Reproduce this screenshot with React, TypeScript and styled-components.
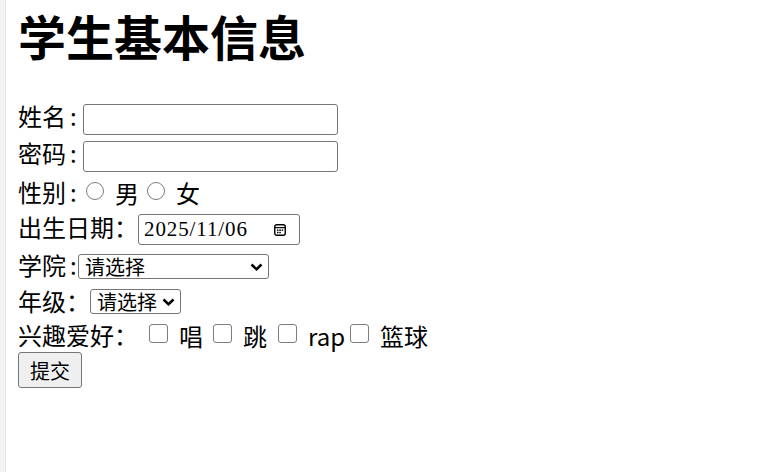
import * as React from 'react'
import styled, { createGlobalStyle } from 'styled-components'

const GlobalStyle = createGlobalStyle`
	html, body {
		margin: 0;
		padding: 0;
		background: #fff;
	}
	body {
		font-family: "Noto Sans CJK SC", "Microsoft YaHei", sans-serif;
		color: #000;
	}
`

const Page = styled.div`
	display: flex;
	min-height: 472px;
	border-left: 5px solid #f3f3f3;
`

const Form = styled.form`
	flex: 1;
	display: flex;
	flex-direction: column;
	border-left: 1px solid #e6e6e6;
	padding-left: 12px;
`

const Title = styled.h1`
	margin: 0 0 31px;
	font-size: 48px;
	line-height: 70px;
	font-weight: 700;
`

const Row = styled.div<{ $h: number }>`
	display: flex;
	align-items: center;
	height: ${p => p.$h}px;
`

const Label = styled.span<{ $w: number; $raise?: number }>`
	flex-shrink: 0;
	width: ${p => p.$w}px;
	font-size: 24px;
	line-height: 32px;
	padding-bottom: ${p => (p.$raise || 0) * 2}px;
	white-space: nowrap;
`

const Colon = styled.span`
	padding-left: 4px;
`

const TextInput = styled.input`
	box-sizing: border-box;
	width: 255px;
	height: 31px;
	margin: 0;
	padding: 0 4px;
	border: 1px solid #767676;
	border-radius: 3px;
	font-size: 20px;
	background: #fff;
`

const Option = styled.label<{ $gap?: number }>`
	display: inline-flex;
	align-items: center;
	margin-right: ${p => p.$gap || 0}px;
	font-size: 24px;
	line-height: 32px;
`

const Tick = styled.input<{ $round?: boolean }>`
	-webkit-appearance: none;
	appearance: none;
	display: inline-block;
	box-sizing: border-box;
	flex: 0 0 auto;
	width: ${p => (p.$round ? 18 : 19)}px;
	height: ${p => (p.$round ? 18 : 19)}px;
	margin: 0 11px 4px 0;
	border: 1.5px solid #7d7d7d;
	border-radius: ${p => (p.$round ? '50%' : '3px')};
	background: #fff;
`

const DateBox = styled.div`
	box-sizing: border-box;
	display: flex;
	align-items: center;
	justify-content: space-between;
	width: 162px;
	height: 31px;
	padding: 0 13px 0 5px;
	border: 1px solid #767676;
	border-radius: 3px;
`

const DateText = styled.span`
	font-family: "Liberation Serif", "Times New Roman", serif;
	font-size: 21px;
	letter-spacing: 0.9px;
	color: #000;
`

const SelectWrap = styled.span`
	position: relative;
	display: inline-flex;
`

const Select = styled.select<{ $w: number }>`
	-webkit-appearance: none;
	appearance: none;
	box-sizing: border-box;
	width: ${p => p.$w}px;
	height: 25px;
	margin: 0;
	padding: 0 0 0 6px;
	border: 1px solid #767676;
	border-radius: 3px;
	background: #fff;
	color: #000;
	font-family: "Noto Sans CJK SC", sans-serif;
	font-size: 20px;
	line-height: 23px;
`

const Chevron = styled.svg`
	position: absolute;
	right: 6px;
	top: 9px;
	pointer-events: none;
`

const Submit = styled.button`
	box-sizing: border-box;
	width: 64px;
	height: 36px;
	margin: 0;
	padding: 0;
	border: 1px solid #767676;
	border-radius: 3px;
	background: #efefef;
	color: #000;
	font-family: "Noto Sans CJK SC", sans-serif;
	font-size: 20px;
`

const Calendar = () => (
	<svg width="12" height="12" viewBox="0 0 12 12">
		<rect x="0.75" y="0.75" width="10.5" height="10.5" rx="2" fill="none" stroke="#000" strokeWidth="1.4" />
		<line x1="1" y1="3.6" x2="11" y2="3.6" stroke="#000" strokeWidth="1.2" />
		<rect x="3" y="5.4" width="1.5" height="1.5" fill="#000" />
		<rect x="5.3" y="5.4" width="1.5" height="1.5" fill="#000" />
		<rect x="7.6" y="5.4" width="1.5" height="1.5" fill="#000" />
		<rect x="3" y="7.8" width="1.5" height="1.5" fill="#000" />
		<rect x="5.3" y="7.8" width="1.5" height="1.5" fill="#000" />
	</svg>
)

const Dropdown = ({ w }: { w: number }) => (
	<SelectWrap>
		<Select $w={w} defaultValue="">
			<option value="">请选择</option>
		</Select>
		<Chevron width="13" height="8" viewBox="0 0 13 8">
			<path d="M1.5 1.5 L6.5 6.2 L11.5 1.5" fill="none" stroke="#000" strokeWidth="2.5" />
		</Chevron>
	</SelectWrap>
)

const hobbies = [
	{ name: '唱', gap: 10 },
	{ name: '跳', gap: 11 },
	{ name: 'rap', gap: 5 },
	{ name: '篮球', gap: 0 },
]

const App = () => {
	return (
		<Page>
			<GlobalStyle />
			<Form onSubmit={e => e.preventDefault()}>
				<Title>学生基本信息</Title>
				<Row $h={37}>
					<Label $w={65} $raise={4}>姓名<Colon>:</Colon></Label>
					<TextInput type="text" />
				</Row>
				<Row $h={36}>
					<Label $w={65} $raise={3}>密码<Colon>:</Colon></Label>
					<TextInput type="password" />
				</Row>
				<Row $h={37}>
					<Label $w={68} $raise={1}>性别<Colon>:</Colon></Label>
					<Option $gap={8}><Tick type="radio" name="sex" $round />男</Option>
					<Option><Tick type="radio" name="sex" $round />女</Option>
				</Row>
				<Row $h={37}>
					<Label $w={120} $raise={3}>出生日期：</Label>
					<DateBox>
						<DateText>2025/11/06</DateText>
						<Calendar />
					</DateBox>
				</Row>
				<Row $h={36}>
					<Label $w={60} $raise={1}>学院<Colon>:</Colon></Label>
					<Dropdown w={191} />
				</Row>
				<Row $h={35}>
					<Label $w={72} $raise={1}>年级：</Label>
					<Dropdown w={91} />
				</Row>
				<Row $h={33}>
					<Label $w={131} $raise={1}>兴趣爱好：</Label>
					{hobbies.map(h => (
						<Option key={h.name} $gap={h.gap}><Tick type="checkbox" />{h.name}</Option>
					))}
				</Row>
				<Row $h={36}>
					<Submit type="submit">提交</Submit>
				</Row>
			</Form>
		</Page>
	)
}

export default App
